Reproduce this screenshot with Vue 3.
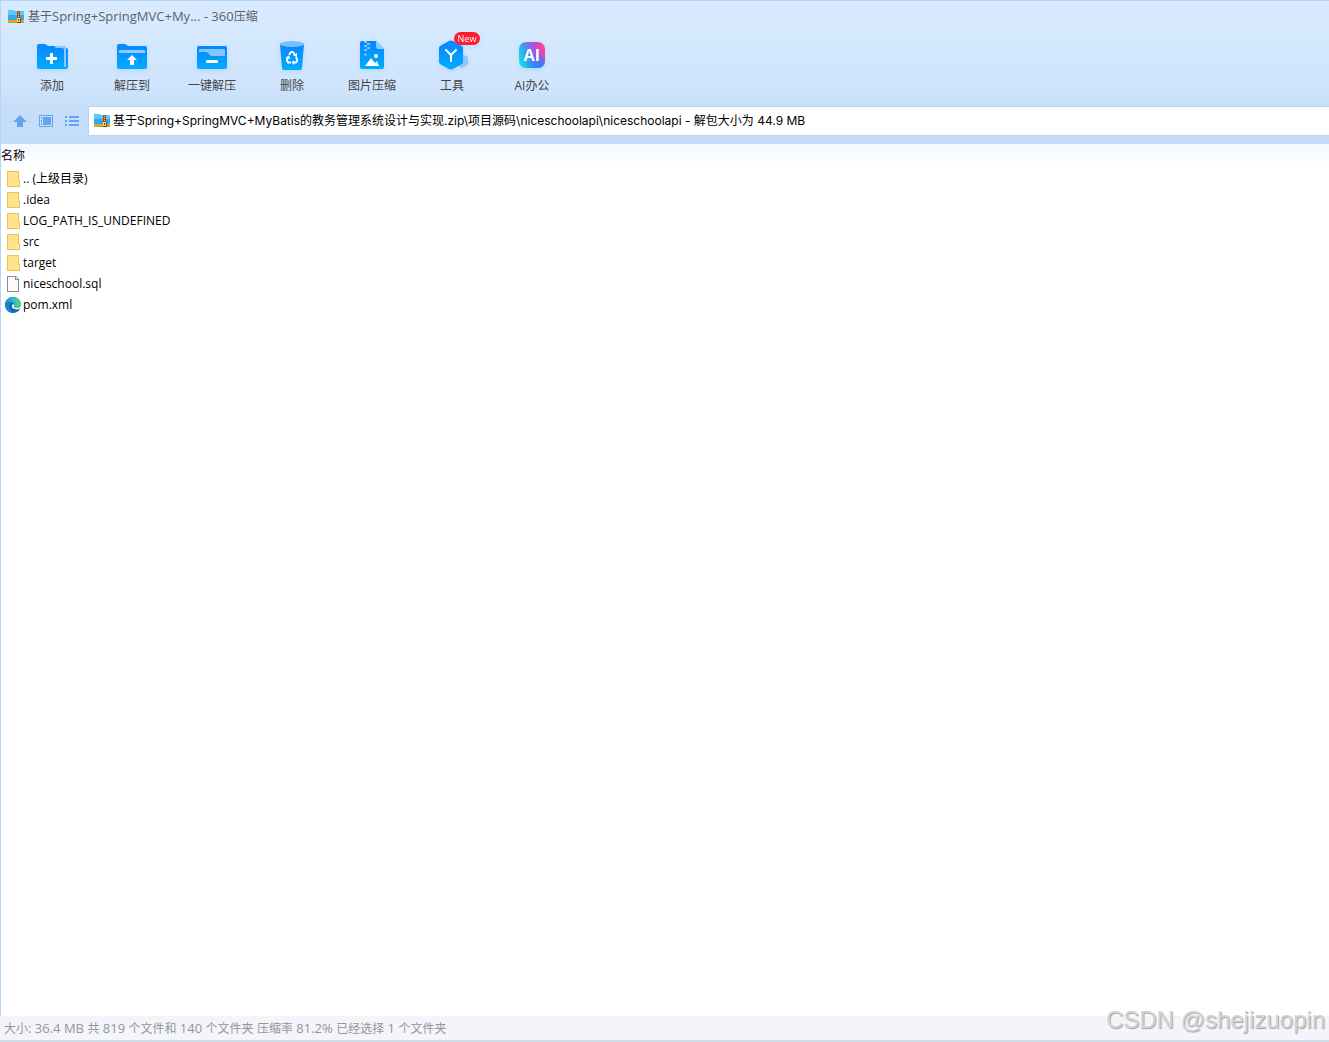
<script setup>
import { h } from 'vue'

const tools = [
  { id: 'add', label: '添加' },
  { id: 'extract', label: '解压到' },
  { id: 'quick', label: '一键解压' },
  { id: 'delete', label: '删除' },
  { id: 'image', label: '图片压缩' },
  { id: 'tools', label: '工具', badge: 'New' },
  { id: 'ai', label: 'AI办公' }
]

const files = [
  { name: '.. (上级目录)', type: 'folder' },
  { name: '.idea', type: 'folder' },
  { name: 'LOG_PATH_IS_UNDEFINED', type: 'folder' },
  { name: 'src', type: 'folder' },
  { name: 'target', type: 'folder' },
  { name: 'niceschool.sql', type: 'file' },
  { name: 'pom.xml', type: 'edge' }
]

const path = '基于Spring+SpringMVC+MyBatis的教务管理系统设计与实现.zip\\项目源码\\niceschoolapi\\niceschoolapi - 解包大小为 44.9 MB'

const title = '基于Spring+SpringMVC+My... - 360压缩'
const status = '大小: 36.4 MB 共 819 个文件和 140 个文件夹 压缩率 81.2% 已经选择 1 个文件夹'

// Latin runs are set one size larger than the Chinese text around them.
const MixedText = ({ text }) =>
  h('span', { class: 'mixed' }, text.split(/([\u4e00-\u9fff]+)/).filter(Boolean).map(part =>
    /[\u4e00-\u9fff]/.test(part) ? part : h('span', { style: { fontSize: '13px' } }, part)
  ))

const ArchiveIcon = () =>
  h('svg', { width: 16, height: 16, viewBox: '0 0 16 16', 'aria-hidden': 'true' }, [
    h('path', { d: 'M0 2Q0 1 1 1H5L7 2H15Q16 2 16 3V12H0Z', fill: '#35a8ee' }),
    h('path', { d: 'M0 2Q0 1 1 1H5L7 2H15Q16 2 16 3V6H0Z', fill: '#5cc9fa' }),
    h('path', { d: 'M0 11H16V13H0Z', fill: '#ff961f' }),
    h('path', { d: 'M0 13H16V14H15H1Q0 14 0 13Z', fill: '#72c83a' }),
    h('path', { d: 'M9 2H12V10H9Z', fill: '#9c4d12' }),
    h('path', { d: 'M10 3H11V4H10ZM10 5H11V6H10ZM10 7H11V8H10Z', fill: '#ffc65a' }),
    h('path', { d: 'M9 9H13V14H9Z', fill: '#7a3e14' }),
    h('path', { d: 'M9 9H12V13H9ZM10 10V12H11V10Z', fill: '#ffd978', 'fill-rule': 'evenodd' })
  ])
</script>

<template>
  <main class="window">
    <header class="top">
      <div class="title"><ArchiveIcon /><MixedText :text="title" /></div>
      <nav class="toolbar">
        <button v-for="tool in tools" :key="tool.id" type="button" class="tool">
          <span class="tool-icon">
            <svg width="32" height="32" viewBox="0 0 32 32" aria-hidden="true">
              <defs>
                <linearGradient :id="'blue-' + tool.id" x1="0" y1="0" x2="0" y2="1">
                  <stop offset="0" stop-color="#0784ff" /><stop offset="1" stop-color="#00adff" />
                </linearGradient>
              </defs>
              <g v-if="tool.id === 'add'">
                <path d="M1 6Q1 4 3 4H9L12 6H27Q29 6 29 8H30Q32 8 32 10V27Q32 29 30 29H3Q1 29 1 27Z" :fill="`url(#blue-${tool.id})`" />
                <path d="M18 6H28Q30 6 30 8V27H28V10Q28 8 26 8H20Z" fill="#86c8ff" />
                <path d="M14 13H17V17H21V20H17V24H14V20H10V17H14Z" fill="#fff" />
              </g>
              <g v-else-if="tool.id === 'extract'">
                <path d="M1 6Q1 4 3 4H9L12 6H29Q31 6 31 8V27Q31 29 29 29H3Q1 29 1 27Z" :fill="`url(#blue-${tool.id})`" />
                <path d="M3 13V11Q3 10 4 10H28Q29 10 29 11V13Z" fill="#8bcbff" />
                <path d="M16 15L21 20H18V25H14V20H11Z" fill="#fff" />
              </g>
              <g v-else-if="tool.id === 'quick'">
                <rect x="1" y="6" width="30" height="23" rx="2" :fill="`url(#blue-${tool.id})`" />
                <path d="M3 11V10Q3 9 4 9H28Q29 9 29 10V16H16Q14 16 13 14L12 13Q11 12 9 12H3Z" fill="#82c5ff" />
                <rect x="10" y="20" width="12" height="3" rx="1" fill="#fff" />
              </g>
              <g v-else-if="tool.id === 'delete'">
                <path d="M4 4H28L26 28Q26 30 24 30H8Q6 30 6 28Z" :fill="`url(#blue-${tool.id})`" />
                <ellipse cx="16" cy="4" rx="12" ry="3" fill="#77c1fb" />
                <g fill="none" stroke="#fff" stroke-width="1.8" stroke-linejoin="round">
                  <path d="M13 15L15 12H17L19 15M12 17.5L10.8 20L12 22.5H15M20 17L21.4 20L20 22.5H18" />
                </g>
                <path d="M21 13V17L17 15.5ZM9.5 17.5L13 15.5L14.5 19ZM18 20V25L15.5 22.5Z" fill="#fff" />
              </g>
              <g v-else-if="tool.id === 'image'">
                <path d="M4 3Q4 1 6 1H20L28 9V27Q28 29 26 29H6Q4 29 4 27Z" :fill="`url(#blue-${tool.id})`" />
                <path d="M20 1L28 9H22Q20 9 20 7Z" fill="#8bcbff" />
                <path d="M8 1H11V3H8ZM11 3H14V5H11ZM8 5H11V7H8ZM11 7H14V9H11ZM8 9H11V11H8Z" fill="#7ec5ff" />
                <circle cx="9.5" cy="14.5" r="1.5" fill="#68b9ff" /><circle cx="20" cy="16" r="2" fill="#fff" />
                <path d="M9 26L15 18L19 23L21 21L23 26Z" fill="#fff" />
              </g>
              <g v-else-if="tool.id === 'tools'">
                <path d="M26 14L32 17V24L26 28L20 24V17Z" fill="#8dc6fa" />
                <path d="M13 1Q15 0 17 1L26 6Q27 7 27 8V22Q27 23 26 24L17 29Q15 30 13 29L4 24Q3 23 3 22V8Q3 7 4 6Z" :fill="`url(#blue-${tool.id})`" />
                <path d="M10 10L15 15L20 10M15 15V21" fill="none" stroke="#fff" stroke-width="2" stroke-linecap="round" />
              </g>
              <g v-else>
                <defs>
                  <linearGradient id="ai-fill" x1="0" y1=".7" x2="1" y2=".3">
                    <stop offset="0" stop-color="#10dfe9" /><stop offset=".35" stop-color="#3c9bee" /><stop offset=".65" stop-color="#ab50e8" /><stop offset="1" stop-color="#ff448c" />
                  </linearGradient>
                  <radialGradient id="ai-low" cx=".8" cy="1" r=".6">
                    <stop offset="0" stop-color="#188aff" /><stop offset="1" stop-color="#188aff" stop-opacity="0" />
                  </radialGradient>
                </defs>
                <rect x="3" y="2" width="26" height="26" rx="7" fill="url(#ai-fill)" />
                <rect x="3" y="2" width="26" height="26" rx="7" fill="url(#ai-low)" />
                <text x="16" y="21" text-anchor="middle" class="ai-text">AI</text>
              </g>
            </svg>
            <span v-if="tool.badge" class="badge">{{ tool.badge }}</span>
          </span>
          <span>{{ tool.label }}</span>
        </button>
      </nav>
      <div class="address-row">
        <div class="nav-buttons">
          <button type="button" aria-label="向上">
            <svg width="16" height="16" viewBox="0 0 16 16"><path d="M8 2L15 9H11V14H5V9H1Z" fill="#67a2ed" /></svg>
          </button>
          <button type="button" aria-label="预览">
            <svg width="16" height="16" viewBox="0 0 16 16"><path d="M1 2H15V14H1ZM2 3V13H14V3Z" fill="#67a2ed" fill-rule="evenodd" /><path d="M3 4H4V6H3ZM3 7H4V9H3ZM3 10H4V12H3ZM5 4H13V12H5Z" fill="#67a2ed" /></svg>
          </button>
          <button type="button" aria-label="列表">
            <svg width="16" height="16" viewBox="0 0 16 16"><path d="M1 3H3V5H1ZM5 3H15V5H5ZM1 7H3V9H1ZM5 7H15V9H5ZM1 11H3V13H1ZM5 11H15V13H5Z" fill="#67a2ed" /></svg>
          </button>
        </div>
        <div class="address"><ArchiveIcon /><input :value="path" aria-label="路径" readonly /></div>
      </div>
    </header>

    <section class="content">
      <table>
        <thead><tr><th scope="col">名称</th></tr></thead>
        <tbody>
          <tr v-for="file in files" :key="file.name">
            <td>
              <div class="file">
                <svg width="16" height="16" viewBox="0 0 16 16" aria-hidden="true">
                  <g v-if="file.type === 'folder'">
                    <path d="M2 0H14V9H15V16H2Z" fill="#e9c455" />
                    <path d="M3 1H13V15H3Z" fill="#ffe28c" />
                    <path d="M13 10H14V15H13Z" fill="#ffe9a6" />
                  </g>
                  <g v-else-if="file.type === 'file'">
                    <path d="M2 0H11L14 3V16H2Z" fill="#8c8c8c" />
                    <path d="M3 1H10V4H13V15H3Z" fill="#fbfbfb" />
                    <path d="M11 1V3H13Z" fill="#fff" />
                  </g>
                  <g v-else>
                    <defs>
                      <linearGradient id="edge-top" x1="0" y1="0" x2="1" y2="0">
                        <stop offset="0" stop-color="#168bd5" /><stop offset=".5" stop-color="#2bbdd4" /><stop offset="1" stop-color="#62d957" />
                      </linearGradient>
                    </defs>
                    <circle cx="8" cy="8" r="8" fill="#1267b8" />
                    <path d="M0 8C0 3 4 0 8 0C13 0 16 4 16 7C16 10 13 11 11 11C9 11 9 10 9 9C10 8 9 5 6 5C3 5 1 6 0 8Z" fill="url(#edge-top)" />
                    <path d="M6 6C3 8 4 14 9 16C5 16 1 14 0 9C2 6 4 5 6 6Z" fill="#1687d1" />
                    <path d="M8 7C6 9 7 12 10 12C12 13 14 12 16 11V9C15 11 12 11 11 11C9 11 9 10 9 9Q10 8 8 7Z" fill="#fff" />
                  </g>
                </svg>
                <span>{{ file.name }}</span>
              </div>
            </td>
          </tr>
        </tbody>
      </table>
    </section>

    <footer class="status"><MixedText :text="status" /></footer>
    <div class="watermark">CSDN @shejizuopin</div>
  </main>
</template>

<style>
body { margin: 0; }
</style>

<style scoped>
* { box-sizing: border-box; }
.window {
  position: relative;
  display: flex;
  flex-direction: column;
  min-height: 100vh;
  background: #fff;
  color: #000;
  font: 12px/20px "Open Sans", "Noto Sans CJK SC", sans-serif;
}
svg { display: block; flex: none; }
button, input {
  border: 0;
  padding: 0;
  background: none;
  color: inherit;
  font: inherit;
}
.top {
  border-top: 1px solid #b7d6f5;
  border-left: 1px solid #b7d3f5;
  background: linear-gradient(#d8eaff, #cfe5fd 60%, #c6def8 73%, #c3ddf9);
}
.title {
  display: flex;
  align-items: center;
  gap: 4px;
  height: 31px;
  padding-left: 7px;
  color: #5d6269;
}
.toolbar {
  display: flex;
  height: 74px;
  padding: 8px 0 0 11px;
}
.tool {
  display: flex;
  flex-direction: column;
  align-items: center;
  gap: 4px;
  width: 80px;
  color: #444;
}
.tool-icon {
  position: relative;
  filter: drop-shadow(0 2px 2px #73b6f240);
}
.badge {
  position: absolute;
  left: 18px;
  top: -8px;
  width: 26px;
  height: 13px;
  border-radius: 7px;
  background: #f91f2d;
  color: #fff;
  font-size: 9px;
  line-height: 13px;
}
.ai-text { font: bold 16px "Open Sans", sans-serif; fill: #fff; }
.address-row { display: flex; height: 38px; }
.nav-buttons {
  display: flex;
  gap: 10px;
  width: 87px;
  padding-left: 11px;
  height: 30px;
  align-items: center;
}
.address {
  display: flex;
  flex: 1;
  align-items: center;
  gap: 3px;
  height: 30px;
  padding-left: 5px;
  border: 1px solid #b5d5f7;
  border-right: 0;
  background: #fff;
}
.address input {
  flex: 1;
  min-width: 0;
  height: 20px;
  outline: 0;
  font-family: Inter, "Noto Sans CJK SC", sans-serif;
}
.content { flex: 1; border-left: 1px solid #b7d3f5; }
table { width: 100%; border-collapse: collapse; }
th {
  height: 24px;
  padding: 0;
  background: linear-gradient(#f3f9ff, #fff);
  font-weight: 400;
  text-align: left;
}
td { height: 21px; padding: 0; }
.file { display: flex; align-items: center; gap: 2px; height: 20px; padding-left: 4px; }
.status {
  height: 26px;
  padding: 2px 4px 0;
  border-bottom: 2px solid #cfdfe9;
  background: #f3f5fa;
  color: #969696;
}
.watermark {
  position: absolute;
  right: 4px;
  bottom: 6px;
  color: #d4d4d7;
  font: 24px/32px "Liberation Sans", sans-serif;
  text-shadow: 1px 1px 1px #a2a2a2, -1px -1px 0 #fff;
}
</style>
